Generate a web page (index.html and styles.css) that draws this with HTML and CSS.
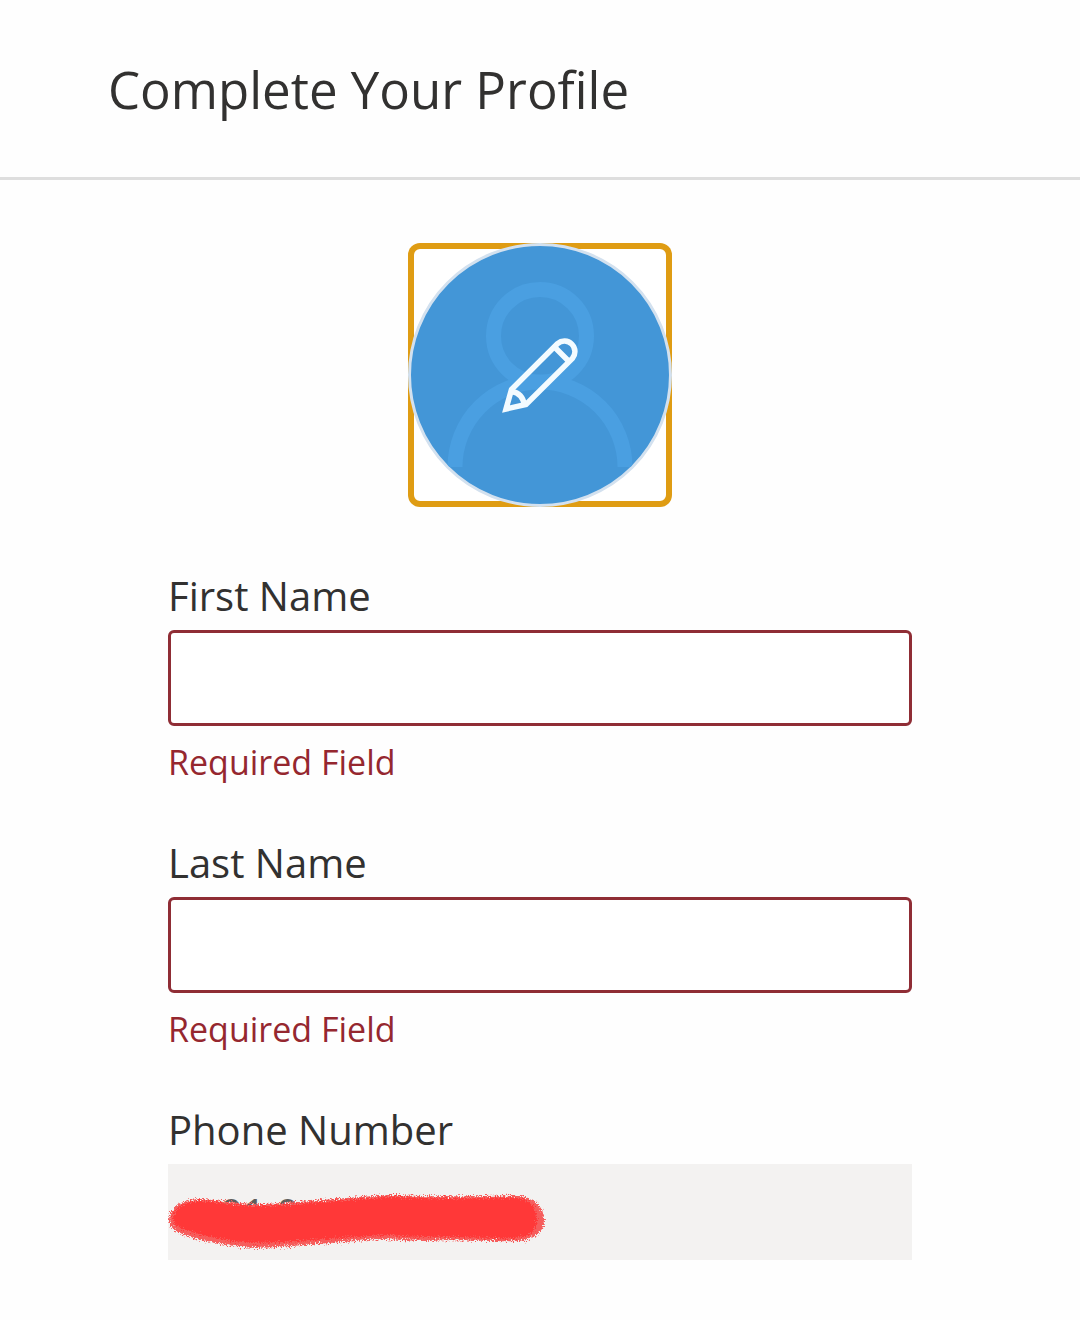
FILE: index.html
```html
<!DOCTYPE html>
<html lang="en">
<head>
<meta charset="utf-8">
<meta name="viewport" content="width=device-width, initial-scale=1">
<title>Complete Your Profile</title>
<link rel="stylesheet" href="styles.css">
</head>
<body>
<header class="header">
  <h1 class="title">Complete Your Profile</h1>
</header>
<main class="main">
  <button class="avatar" type="button" aria-label="Edit photo">
    <svg class="avatar-art" viewBox="0 0 264 264" aria-hidden="true">
      <clipPath id="disc"><circle cx="132" cy="132" r="129"/></clipPath>
      <circle cx="132" cy="132" r="130.5" fill="#4396d7" stroke="#d3e1ef" stroke-width="3"/>
      <g fill="none" stroke="#4a9fe1" stroke-width="15" clip-path="url(#disc)">
        <circle cx="132" cy="93" r="46.5"/>
        <path d="M47 224a85 85 0 0 1 170 0"/>
      </g>
      <g fill="none" stroke="#f3fbff" stroke-width="5.500">
        <path d="M98 166L103.500 146.500L149.600 100.600A10.500 10.500 0 0 1 164.400 115.400L118 161.500Z"/>
        <path d="M146.500 104L161 118.500M104 148.500Q114.500 150.500 116.500 162"/>
      </g>
    </svg>
  </button>
  <form class="form">
    <div class="field">
      <label class="label" for="first">First Name</label>
      <input class="input" id="first" type="text" aria-invalid="true" aria-describedby="first-error">
      <p class="error" id="first-error">Required Field</p>
    </div>
    <div class="field">
      <label class="label" for="last">Last Name</label>
      <input class="input" id="last" type="text" aria-invalid="true" aria-describedby="last-error">
      <p class="error" id="last-error">Required Field</p>
    </div>
    <div class="field">
      <label class="label" for="phone">Phone Number</label>
      <div class="phone">
        <input class="input readonly" id="phone" type="text" value="01 0" readonly>
        <svg class="marker" viewBox="0 0 380 64" aria-hidden="true">
          <defs>
            <filter id="rough" x="-5%" y="-10%" width="110%" height="120%">
              <feTurbulence type="fractalNoise" baseFrequency=".8" numOctaves="2" seed="4"/>
              <feDisplacementMap in="SourceGraphic" scale="9" xChannelSelector="R" yChannelSelector="G"/>
            </filter>
          </defs>
          <g filter="url(#rough)">
            <path d="M1 27C2 13 15 6 34 6C54 7 75 12 98 11C140 9 180 4 222 2C243 2 252 4 277 3C306 4 328 2 352 3C368 5 376 15 376 27C376 39 367 47 350 48C320 49 292 46 256 48C235 48 221 45 200 47C158 50 120 54 88 55C65 54 42 49 25 45C10 40 1 35 1 27Z" fill="#f65d5c"/>
            <path d="M5 26C6 14 18 8 34 8C54 9 75 14 98 13C140 11 180 6 222 4C243 4 252 6 277 5C306 6 328 4 350 5C363 7 369 16 369 27C369 37 362 44 348 45C320 46 292 43 256 44C235 44 221 41 200 43C158 46 120 49 88 50C65 49 42 44 27 40C13 36 5 33 5 26Z" fill="#ff3737"/>
          </g>
        </svg>
      </div>
    </div>
  </form>
</main>
</body>
</html>
```
FILE: styles.css
```css
* {
  box-sizing: border-box;
}

body {
  margin: 0;
  background: #fefefe;
  color: #323130;
  font-family: "Open Sans", "Noto Sans", sans-serif;
}

.header {
  padding: 55px 108px 53px;
  border-bottom: 3px solid #dedede;
}

.title {
  margin: 0;
  font-size: 51px;
  line-height: 69px;
  font-weight: 400;
}

.main {
  display: flex;
  flex-direction: column;
  align-items: center;
  gap: 65px;
  padding: 63px 168px 60px;
}

.avatar {
  width: 264px;
  height: 264px;
  padding: 0;
  border: 0;
  border-radius: 12px;
  background: #fff;
  box-shadow: inset 0 0 0 6px #df9c13;
}

.avatar-art {
  display: block;
  width: 100%;
}

.form {
  display: flex;
  flex-direction: column;
  gap: 56px;
  width: 100%;
}

.field {
  display: flex;
  flex-direction: column;
}

.label {
  font-size: 40px;
  line-height: 48px;
  padding-bottom: 10px;
}

.input {
  width: 100%;
  height: 96px;
  padding: 0 24px;
  border: 3px solid #8f2d35;
  border-radius: 6px;
  background: #fff;
  color: #605e5c;
  font: inherit;
  font-size: 40px;
}

.readonly {
  display: block;
  padding: 0 52px;
  border: 0;
  border-radius: 0;
  background: #f3f2f1;
}

.error {
  margin: 0;
  padding-top: 15px;
  color: #95272f;
  font-size: 34px;
  line-height: 42px;
}

.phone {
  position: relative;
}

.marker {
  position: absolute;
  top: 29px;
  left: 0;
  width: 380px;
  height: 64px;
}
```
